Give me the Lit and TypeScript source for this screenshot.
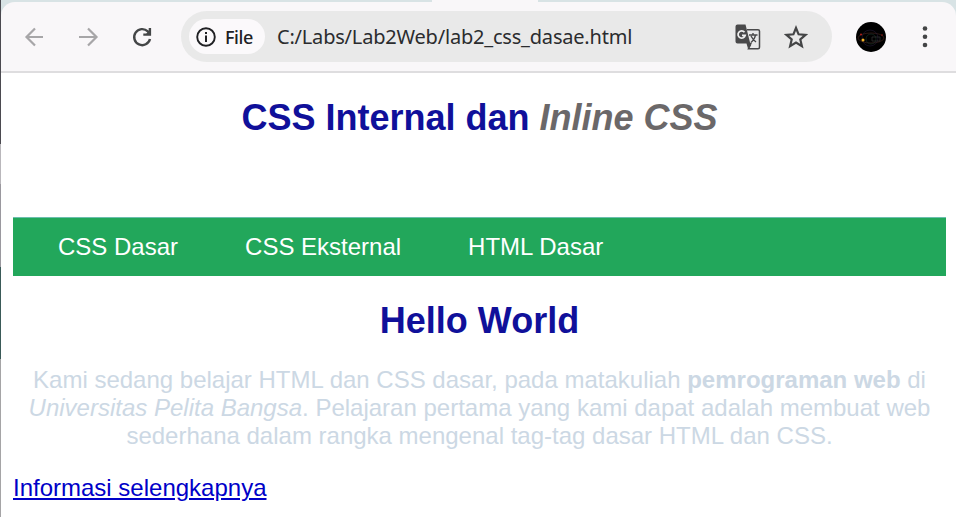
import { LitElement, html, css } from "lit";
import { customElement } from "lit/decorators.js";

@customElement("browser-toolbar")
export class BrowserToolbar extends LitElement {
  static styles = css`
    :host { display: block; background: #d8e3e5; padding-top: 2px; position: relative; }
    .tab { position: absolute; top: 0; left: 431px; width: 106px; height: 2px; background: #f9f7f9; }
    .bar {
      box-sizing: border-box; height: 71px; display: flex; align-items: center;
      background: #f9f7f9; border-bottom: 2px solid #dedddf; border-radius: 14px 14px 0 0;
      padding-left: 20px;
    }
    svg { display: block; flex: none; }
    .back { margin-right: 26px; }
    .forward { margin-right: 26px; }
    .reload { margin-right: 26px; }
    .omnibox {
      box-sizing: border-box; width: 651px; height: 51px; border-radius: 26px; background: #e9e9e9;
      display: flex; align-items: center; padding: 0 24px 0 8px; margin-right: 24px;
    }
    .chip {
      box-sizing: border-box; width: 76px; height: 35px; border-radius: 18px; background: #fbf9fb;
      display: flex; align-items: center; padding-left: 6px; margin-right: 12px;
    }
    .chip span { font: 500 18px/24px "Noto Sans", sans-serif; color: #202124; margin-left: 8px; letter-spacing: -0.4px; }
    .url { flex: 1; font: 400 20px/26px "Noto Sans", sans-serif; color: #2b2c2e; white-space: nowrap; letter-spacing: -0.2px; }
    .translate { margin-right: 23px; }
    .avatar { margin-right: 24px; }
  `;
  render() {
    return html`
      <div class="tab"></div>
      <div class="bar">
        <svg class="back" width="28" height="28" viewBox="0 0 28 28" fill="none" stroke="#a7a6a8" stroke-width="2.200"><path d="M22 14H6M14 5.500 5.500 14l8.500 8.500" /></svg>
        <svg class="forward" width="28" height="28" viewBox="0 0 28 28" fill="none" stroke="#a7a6a8" stroke-width="2.200"><path d="M4 14h16.500M13 5.500l8.500 8.500-8.500 8.500" /></svg>
        <svg class="reload" width="26" height="28" viewBox="0 0 26 28" fill="none" stroke="#444647" stroke-width="2.400"><path d="M21 16A8 8 0 1 1 18.800 8.400L20 9.800" /><path d="M20.900 5v6.600h-6.600" /><path d="M21 7v4.500h-4.500z" fill="#444647" stroke="none" /></svg>
        <div class="omnibox">
          <div class="chip">
            <svg width="22" height="22" viewBox="0 0 22 22"><circle cx="11" cy="11" r="8.800" fill="none" stroke="#202124" stroke-width="1.900" /><path d="M10 9.500h2V16h-2zM10 6h2v2h-2z" fill="#202124" /></svg>
            <span>File</span>
          </div>
          <div class="url">C:/Labs/Lab2Web/lab2_css_dasae.html</div>
          <svg class="translate" width="26" height="26" viewBox="0 0 26 26">
            <path d="M12 5.700h11a1.500 1.500 0 0 1 1.500 1.500v16a1.500 1.500 0 0 1-1.500 1.500H13.500l2-4" fill="none" stroke="#49494a" stroke-width="1.500" />
            <path d="M2.500.500h8l4.500 18 2 1-4 5-1.500-5h-9a2 2 0 0 1-2-2v-15a2 2 0 0 1 2-2z" fill="#49494a" />
            <path d="M14 11h8.500M18 9v2M20.500 11c-.500 3-2.500 6-4.500 7.500M16 12c1 2 3 4.500 5 6" fill="none" stroke="#49494a" stroke-width="1.400" />
            <path d="M9.500 8.300A3.600 3.600 0 1 0 10.200 11.300H7" fill="none" stroke="#eee" stroke-width="1.800" />
          </svg>
          <svg width="24" height="24" viewBox="0 0 24 24"><path d="m12 3 2.600 6.300 6.900.600-5.200 4.500 1.600 6.800-5.900-3.600-5.900 3.600 1.600-6.800-5.200-4.500 6.900-.600z" fill="none" stroke="#444546" stroke-width="2.200" /></svg>
        </div>
        <svg class="avatar" width="30" height="30" viewBox="0 0 30 30">
          <circle cx="15" cy="15" r="15" fill="#000" />
          <g fill="none" stroke-width=".6"><ellipse cx="15" cy="16" rx="13" ry="5" stroke="#4a2620" /><circle cx="14" cy="16" r="8" stroke="#241b36" /><circle cx="15" cy="17" r="5" stroke="#19362b" /><path d="M16 15h8v4h-8z" stroke="#3c3c3c" /></g>
          <circle cx="7" cy="18" r="1.500" fill="#f2b126" /><circle cx="5" cy="12.500" r="1" fill="#b02018" /><circle cx="26" cy="13" r=".7" fill="#b02018" />
        </svg>
        <svg width="30" height="30" viewBox="0 0 30 30" fill="#444546"><circle cx="15" cy="6.500" r="2.300" /><circle cx="15" cy="14.800" r="2.300" /><circle cx="15" cy="23" r="2.300" /></svg>
      </div>
    `;
  }
}

@customElement("app-root")
export class AppRoot extends LitElement {
  static styles = css`
    :host { display: flex; height: 517px; overflow: hidden; background: #fff; font: 24px/28px "Liberation Sans", Arial, sans-serif; }
    .edge {
      width: 1px; flex: none;
      background: linear-gradient(#4b4a50 0 144px, #b9b7bb 144px 184px, #9a989e 184px 267px, #3a5a58 267px 359px, #a5a4a6 359px);
    }
    .window { flex: 1; min-width: 0; }
    .page { padding: 24px 10px 0 12px; }
    h1 { margin: 0 0 78px; font-size: 36px; line-height: 42px; text-align: center; color: #10109a; white-space: nowrap; }
    h1 i { color: #6b6869; }
    nav { box-sizing: border-box; display: flex; gap: 67px; height: 59px; padding: 0 0 1px 45px; align-items: center; background: #22a75b; border-top: 1px solid #6cbfae; margin-bottom: 24px; }
    nav a { color: #fff; white-space: nowrap; }
    h1.hello { margin-bottom: 24px; }
    p { margin: 0 0 24px; text-align: center; color: #ccd8e4; white-space: nowrap; }
    .more { color: #0000c8; text-decoration: underline; }
  `;
  render() {
    return html`
      <div class="edge"></div>
      <div class="window">
        <browser-toolbar></browser-toolbar>
        <div class="page">
          <h1>CSS Internal dan <i>Inline CSS</i></h1>
          <nav><a>CSS Dasar</a><a>CSS Eksternal</a><a>HTML Dasar</a></nav>
          <h1 class="hello">Hello World</h1>
          <p>Kami sedang belajar HTML dan CSS dasar, pada matakuliah <b>pemrograman web</b> di<br /><i>Universitas Pelita Bangsa</i>. Pelajaran pertama yang kami dapat adalah membuat web<br />sederhana dalam rangka mengenal tag-tag dasar HTML dan CSS.</p>
          <a class="more">Informasi selengkapnya</a>
        </div>
      </div>
    `;
  }
}
